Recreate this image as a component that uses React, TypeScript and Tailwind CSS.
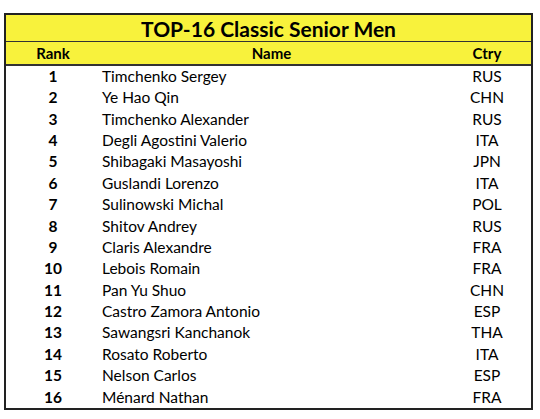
const rows: [number, string, string][] = [
  [1, "Timchenko Sergey", "RUS"],
  [2, "Ye Hao Qin", "CHN"],
  [3, "Timchenko Alexander", "RUS"],
  [4, "Degli Agostini Valerio", "ITA"],
  [5, "Shibagaki Masayoshi", "JPN"],
  [6, "Guslandi Lorenzo", "ITA"],
  [7, "Sulinowski Michal", "POL"],
  [8, "Shitov Andrey", "RUS"],
  [9, "Claris Alexandre", "FRA"],
  [10, "Lebois Romain", "FRA"],
  [11, "Pan Yu Shuo", "CHN"],
  [12, "Castro Zamora Antonio", "ESP"],
  [13, "Sawangsri Kanchanok", "THA"],
  [14, "Rosato Roberto", "ITA"],
  [15, "Nelson Carlos", "ESP"],
  [16, "Ménard Nathan", "FRA"],
]

export default function App() {
  return (
    <div className="w-[540px] h-[419px] bg-white pt-[13px] pl-[4px] font-['Lato',sans-serif] text-black">
      <div className="w-[529px] h-[397px] border-2 border-[#222] flex flex-col">
        {/* title */}
        <div className="h-[27px] bg-[#f8f23c] border-b border-[#333] flex items-center justify-center text-[21px] font-bold leading-none">
          TOP-16 Classic Senior Men
        </div>
        {/* header */}
        <div className="h-[24px] bg-[#f8f23c] border-b-2 border-[#333] flex items-center text-[15px] font-bold leading-none">
          <div className="w-[94px] text-center">Rank</div>
          <div className="flex-1 text-center">Name</div>
          <div className="w-[88px] text-center">Ctry</div>
        </div>
        {/* rows */}
        <div className="flex-1 flex flex-col">
          {rows.map(([rank, name, ctry]) => (
            <div key={rank} className="flex-1 flex items-center text-[15.5px] leading-none">
              <div className="w-[94px] text-center font-bold">{rank}</div>
              <div className="flex-1 pl-[2px]">{name}</div>
              <div className="w-[88px] text-center">{ctry}</div>
            </div>
          ))}
        </div>
      </div>
    </div>
  )
}
